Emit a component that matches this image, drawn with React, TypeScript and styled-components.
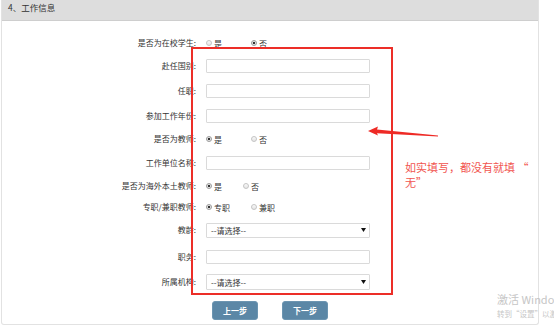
import styled, { createGlobalStyle } from 'styled-components';

type Field =
  | { kind: 'radio'; label: string; options: string[]; checked: number; spread: number; gap: number }
  | { kind: 'input'; label: string; gap: number }
  | { kind: 'select'; label: string; gap: number; tall?: boolean };

const fields: Field[] = [
  { kind: 'radio', label: '是否为在校学生', options: ['是', '否'], checked: 1, spread: 29, gap: 0 },
  { kind: 'input', label: '赴任国别', gap: 7 },
  { kind: 'input', label: '任职', gap: 9 },
  { kind: 'input', label: '参加工作年份', gap: 9 },
  { kind: 'radio', label: '是否为教师', options: ['是', '否'], checked: 0, spread: 29, gap: 7 },
  { kind: 'input', label: '工作单位名称', gap: 8 },
  { kind: 'radio', label: '是否为海外本土教师', options: ['是', '否'], checked: 0, spread: 21, gap: 7 },
  { kind: 'radio', label: '专职/兼职教师', options: ['专职', '兼职'], checked: 0, spread: 21, gap: 5 },
  { kind: 'select', label: '教龄', gap: 7 },
  { kind: 'input', label: '职务', gap: 11 },
  { kind: 'select', label: '所属机构', gap: 9, tall: true },
];

const GlobalStyle = createGlobalStyle`
  html, body {
    margin: 0;
    padding: 0;
    background: #ffffff;
  }
  body {
    font-family: "Noto Sans CJK SC", "Noto Sans", sans-serif;
    color: #333333;
  }
`;

const App = () => {
  return (
    <>
      <GlobalStyle />
      <Page>
        <Panel>
          <Header>4、工作信息</Header>
          <Form>
            {fields.map((f) => (
              <Row key={f.label} $gap={f.gap}>
                <Label>{f.label}:</Label>
                {f.kind === 'radio' && (
                  <RadioGroup $spread={f.spread}>
                    {f.options.map((o, i) => (
                      <RadioOption key={o}>
                        <RadioDot $checked={i === f.checked} />
                        {o}
                      </RadioOption>
                    ))}
                  </RadioGroup>
                )}
                {f.kind === 'input' && <TextInput type='text' />}
                {f.kind === 'select' && (
                  <SelectBox $tall={f.tall}>
                    --请选择--
                    <svg width='5' height='4' viewBox='0 0 5 4'>
                      <path d='M0 0h5L2.5 4z' fill='#111' />
                    </svg>
                  </SelectBox>
                )}
              </Row>
            ))}
            <Buttons>
              <StepButton>上一步</StepButton>
              <StepButton>下一步</StepButton>
            </Buttons>
          </Form>
        </Panel>

        {/* screenshot annotation drawn over the form */}
        <RedFrame />
        <Arrow width='80' height='16' viewBox='0 0 80 16'>
          <polygon points='0,5 10,0.5 9,3.6 70,9.5 70,10.6 9,7.2 10,9.5' fill='#ee2a25' />
        </Arrow>
        <Note>
          如实填写，都没有就填 “
          <br />
          无”
        </Note>

        <Watermark>
          <WatermarkTitle>激活 Windows</WatermarkTitle>
          <WatermarkSub>转到“设置”以激活Windows。</WatermarkSub>
        </Watermark>
      </Page>
    </>
  );
};

const Page = styled.div`
  position: relative;
  width: 554px;
  height: 329px;
  overflow: hidden;
  background: #ffffff;
`;

const Panel = styled.div`
  box-sizing: border-box;
  margin-left: 1px;
  width: 538px;
  height: 325px;
  border: 1px solid #e2e2e2;
  border-top: none;
  border-radius: 0 0 3px 3px;
`;

const Header = styled.div`
  height: 20px;
  line-height: 15px;
  padding-left: 6px;
  background: #dddddd;
  border-bottom: 1px solid #cecece;
  font-size: 8.5px;
  color: #333;
`;

const Form = styled.div`
  padding-top: 14px;
  display: flex;
  flex-direction: column;
`;

const Row = styled.div<{ $gap: number }>`
  display: grid;
  grid-template-columns: 194px 1fr;
  column-gap: 10px;
  align-items: center;
  height: 16px;
  margin-top: ${(p) => p.$gap}px;
`;

const Label = styled.div`
  text-align: right;
  font-size: 8px;
  line-height: 16px;
  color: #333;
  white-space: nowrap;
`;

const RadioGroup = styled.div<{ $spread: number }>`
  display: flex;
  align-items: center;
  gap: ${(p) => p.$spread}px;
`;

const RadioOption = styled.label`
  display: inline-flex;
  align-items: center;
  gap: 2px;
  font-size: 8px;
  color: #333;
`;

const RadioDot = styled.span<{ $checked: boolean }>`
  box-sizing: border-box;
  width: 6px;
  height: 6px;
  border-radius: 50%;
  border: 1px solid ${(p) => (p.$checked ? '#9a9a9a' : '#c4c4c4')};
  background: ${(p) =>
    p.$checked
      ? 'radial-gradient(circle, #333 0 1.3px, #eeeeee 1.6px)'
      : 'linear-gradient(#fafafa, #e4e4e4)'};
`;

const TextInput = styled.input`
  box-sizing: border-box;
  width: 164px;
  height: 14px;
  margin: 0;
  padding: 0 3px;
  border: 1px solid #dadada;
  border-radius: 1px;
  background: #fff;
  outline: none;
`;

const SelectBox = styled.div<{ $tall?: boolean }>`
  box-sizing: border-box;
  width: 164px;
  height: ${(p) => (p.$tall ? 16 : 15)}px;
  padding: 0 3px 0 4px;
  border: 1px solid #dadada;
  border-radius: 1px;
  display: flex;
  align-items: center;
  justify-content: space-between;
  font-size: 8px;
  color: #333;
`;

const Buttons = styled.div`
  display: flex;
  justify-content: center;
  gap: 24px;
  margin-top: 11px;
`;

const StepButton = styled.button`
  width: 46px;
  height: 19px;
  padding: 0;
  border: 1px solid #6c95b1;
  border-radius: 3px;
  background: #5b87a6;
  color: #ffffff;
  font-family: "Noto Sans CJK SC", sans-serif;
  font-size: 8px;
  font-weight: 700;
`;

const RedFrame = styled.div`
  position: absolute;
  left: 191px;
  top: 47px;
  width: 198px;
  height: 244px;
  border: 2px solid #ec2e28;
`;

const Arrow = styled.svg`
  position: absolute;
  left: 368px;
  top: 126px;
`;

const Note = styled.div`
  position: absolute;
  left: 405px;
  top: 160px;
  font-size: 11px;
  line-height: 15px;
  color: #f15550;
  white-space: nowrap;
`;

const Watermark = styled.div`
  position: absolute;
  left: 497px;
  top: 292px;
  white-space: nowrap;
  color: #c6c6c6;
`;

const WatermarkTitle = styled.div`
  font-family: "Noto Sans CJK SC", "Noto Sans", sans-serif;
  font-size: 11px;
  line-height: 15px;
`;

const WatermarkSub = styled.div`
  font-size: 7.5px;
  line-height: 10px;
  margin-top: 2px;
`;

export default App;
